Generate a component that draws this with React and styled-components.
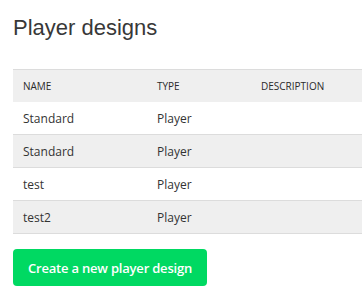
import styled, { createGlobalStyle } from 'styled-components'

const Global = createGlobalStyle`
	html, body {
		margin: 0;
		background: #fff;
		overflow: hidden;
	}
`

const Page = styled.div`
	padding: 15px 0 0 13px;
	font-family: 'Open Sans', sans-serif;
`

const Title = styled.h1`
	margin: 0 0 28px;
	font-family: 'Liberation Sans', Arial, sans-serif;
	font-size: 22px;
	line-height: 26px;
	font-weight: 400;
	color: #383838;
`

const Table = styled.div`
	border-top: 1px solid #dcdcdc;
	width: 349px;
`

const Row = styled.div`
	display: grid;
	grid-template-columns: 134px 104px 1fr;
	height: 32px;
	align-items: center;
	background: ${p => (p.$shaded ? '#efefef' : '#fff')};
	border-bottom: ${p => (p.$head ? 'none' : '1px solid #dcdcdc')};
`

const Cell = styled.div`
	padding-left: 10px;
	font-size: ${p => (p.$head ? '10px' : '12px')};
	text-transform: ${p => (p.$head ? 'uppercase' : 'none')};
	color: ${p => (p.$head ? '#2b2b2b' : '#333')};
`

const Button = styled.button`
	margin-top: 15px;
	height: 37px;
	padding: 0 15px;
	border: none;
	border-radius: 4px;
	background: #00d962;
	color: #fff;
	font-family: 'Open Sans', sans-serif;
	font-size: 13px;
	font-weight: 600;
	letter-spacing: -0.2px;
	cursor: pointer;
`

const designs = [
	{ name: 'Standard', type: 'Player' },
	{ name: 'Standard', type: 'Player' },
	{ name: 'test', type: 'Player' },
	{ name: 'test2', type: 'Player' },
]

export default function App() {
	return (
		<>
			<Global />
			<Page>
				<Title>Player designs</Title>
				<Table>
					<Row $head $shaded>
						<Cell $head>Name</Cell>
						<Cell $head>Type</Cell>
						<Cell $head>Description</Cell>
					</Row>
					{designs.map((d, i) => (
						<Row key={i} $shaded={i % 2 === 1}>
							<Cell>{d.name}</Cell>
							<Cell>{d.type}</Cell>
							<Cell />
						</Row>
					))}
				</Table>
				<Button>Create a new player design</Button>
			</Page>
		</>
	)
}
